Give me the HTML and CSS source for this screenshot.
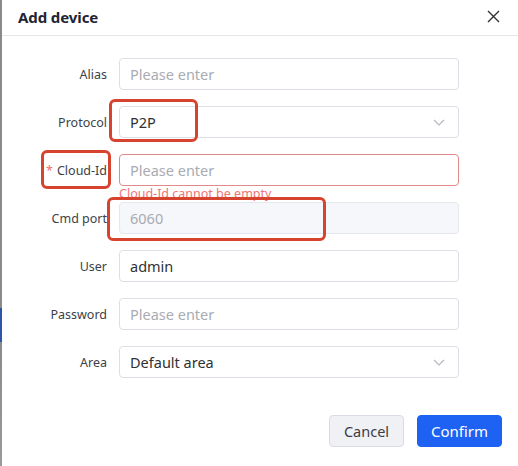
FILE: index.html
```html
<!DOCTYPE html>
<html lang="en">
<head>
<meta charset="utf-8">
<title>Add device</title>
<link rel="stylesheet" href="styles.css">
</head>
<body>
<div class="page">
  <div class="edge"></div>
  <div class="dialog">
    <header class="head">
      <h2 class="title">Add device</h2>
      <button class="close" type="button" aria-label="Close">
        <svg width="13" height="13" viewBox="0 0 13 13"><path d="M1 1 L12 12 M12 1 L1 12" stroke="#303133" stroke-width="1.4" fill="none"/></svg>
      </button>
    </header>
    <form class="form">
      <div class="row">
        <label class="label">Alias</label>
        <div class="input"><span class="ph">Please enter</span></div>
      </div>
      <div class="row">
        <label class="label">Protocol</label>
        <div class="input select"><span class="val">P2P</span>
          <svg class="chev" width="12" height="7" viewBox="0 0 12 7"><path d="M1 1 L6 6 L11 1" stroke="#b4b7bd" stroke-width="1.2" fill="none"/></svg>
        </div>
      </div>
      <div class="row">
        <label class="label"><span class="req">*</span>Cloud-Id</label>
        <div class="input error"><span class="ph">Please enter</span></div>
        <div class="err-msg">Cloud-Id cannot be empty</div>
      </div>
      <div class="row">
        <label class="label">Cmd port</label>
        <div class="input disabled"><span class="ph">6060</span></div>
      </div>
      <div class="row">
        <label class="label">User</label>
        <div class="input"><span class="val">admin</span></div>
      </div>
      <div class="row">
        <label class="label">Password</label>
        <div class="input"><span class="ph">Please enter</span></div>
      </div>
      <div class="row">
        <label class="label">Area</label>
        <div class="input select"><span class="val">Default area</span>
          <svg class="chev" width="12" height="7" viewBox="0 0 12 7"><path d="M1 1 L6 6 L11 1" stroke="#b4b7bd" stroke-width="1.2" fill="none"/></svg>
        </div>
      </div>
    </form>
    <footer class="foot">
      <button class="btn cancel" type="button">Cancel</button>
      <button class="btn confirm" type="button">Confirm</button>
    </footer>
  </div>
  <div class="mark mark-protocol"></div>
  <div class="mark mark-cloud"></div>
  <div class="mark mark-port"></div>
</div>
</body>
</html>
```
FILE: styles.css
```css
* { box-sizing: border-box; }
html, body { margin: 0; padding: 0; background: #fff; }
body { font-family: "Noto Sans", "Liberation Sans", sans-serif; color: #303133; }

.page {
  position: relative;
  display: flex;
  width: 518px;
  height: 466px;
  overflow: hidden;
}

.edge {
  width: 2px;
  flex: none;
  background: linear-gradient(to bottom, #8a8a8a 0, #8a8a8a 308px, #2f55a8 308px, #2f55a8 342px, #8a8a8a 342px, #9a9a9a 100%);
}

.dialog {
  flex: 1;
  display: flex;
  flex-direction: column;
}

.head {
  height: 36px;
  border-bottom: 1px solid #e6e6e6;
  display: flex;
  align-items: center;
  justify-content: space-between;
  padding: 0 18px 2px 16px;
}
.title {
  margin: 0;
  font-size: 15px;
  font-weight: 700;
  color: #1f2433;
  letter-spacing: -0.1px;
}
.close {
  border: 0;
  background: none;
  padding: 0;
  width: 13px;
  height: 13px;
  display: flex;
}

.form {
  display: flex;
  flex-direction: column;
  gap: 16px;
  padding-top: 22px;
}
.row {
  position: relative;
  display: grid;
  grid-template-columns: 117px 340px;
  align-items: center;
}
.label {
  text-align: right;
  padding-right: 12px;
  font-size: 12.5px;
  color: #3c3f46;
}
.req { color: #f56c6c; margin-right: 4px; }

.input {
  height: 32px;
  border: 1px solid #dcdfe6;
  border-radius: 4px;
  display: flex;
  align-items: center;
  padding: 0 12px 0 10px;
  font-size: 14.5px;
  background: #fff;
}
.input .ph { color: #a8abb2; }
.input .val { color: #303133; }
.input.error { border-color: #e28a8a; }
.input.disabled { background: #f5f7fa; border-color: #e4e7ed; }
.select { justify-content: space-between; }
.chev { margin-right: 1px; }

.err-msg {
  position: absolute;
  left: 117px;
  top: 100%;
  margin-top: 1px;
  font-size: 12.5px;
  line-height: 14px;
  color: #f07474;
}

.foot {
  display: flex;
  justify-content: flex-end;
  gap: 13px;
  padding-right: 16px;
  margin-top: 37px;
}
.btn {
  height: 32px;
  border-radius: 4px;
  font-family: inherit;
  font-size: 14.5px;
  padding: 0;
}
.cancel {
  width: 75px;
  background: #f0f1f5;
  border: 1px solid #d9dce2;
  color: #3a3d44;
}
.confirm {
  width: 85px;
  background: #1e62f4;
  border: 1px solid #1e62f4;
  color: #fff;
  font-size: 15px;
}

.mark {
  position: absolute;
  border: 3px solid #d6432e;
  border-radius: 6px;
}
.mark-protocol { left: 109px; top: 99px; width: 89px; height: 43px; }
.mark-cloud { left: 41px; top: 150px; width: 70px; height: 39px; }
.mark-port { left: 107px; top: 197px; width: 219px; height: 44px; }
```
